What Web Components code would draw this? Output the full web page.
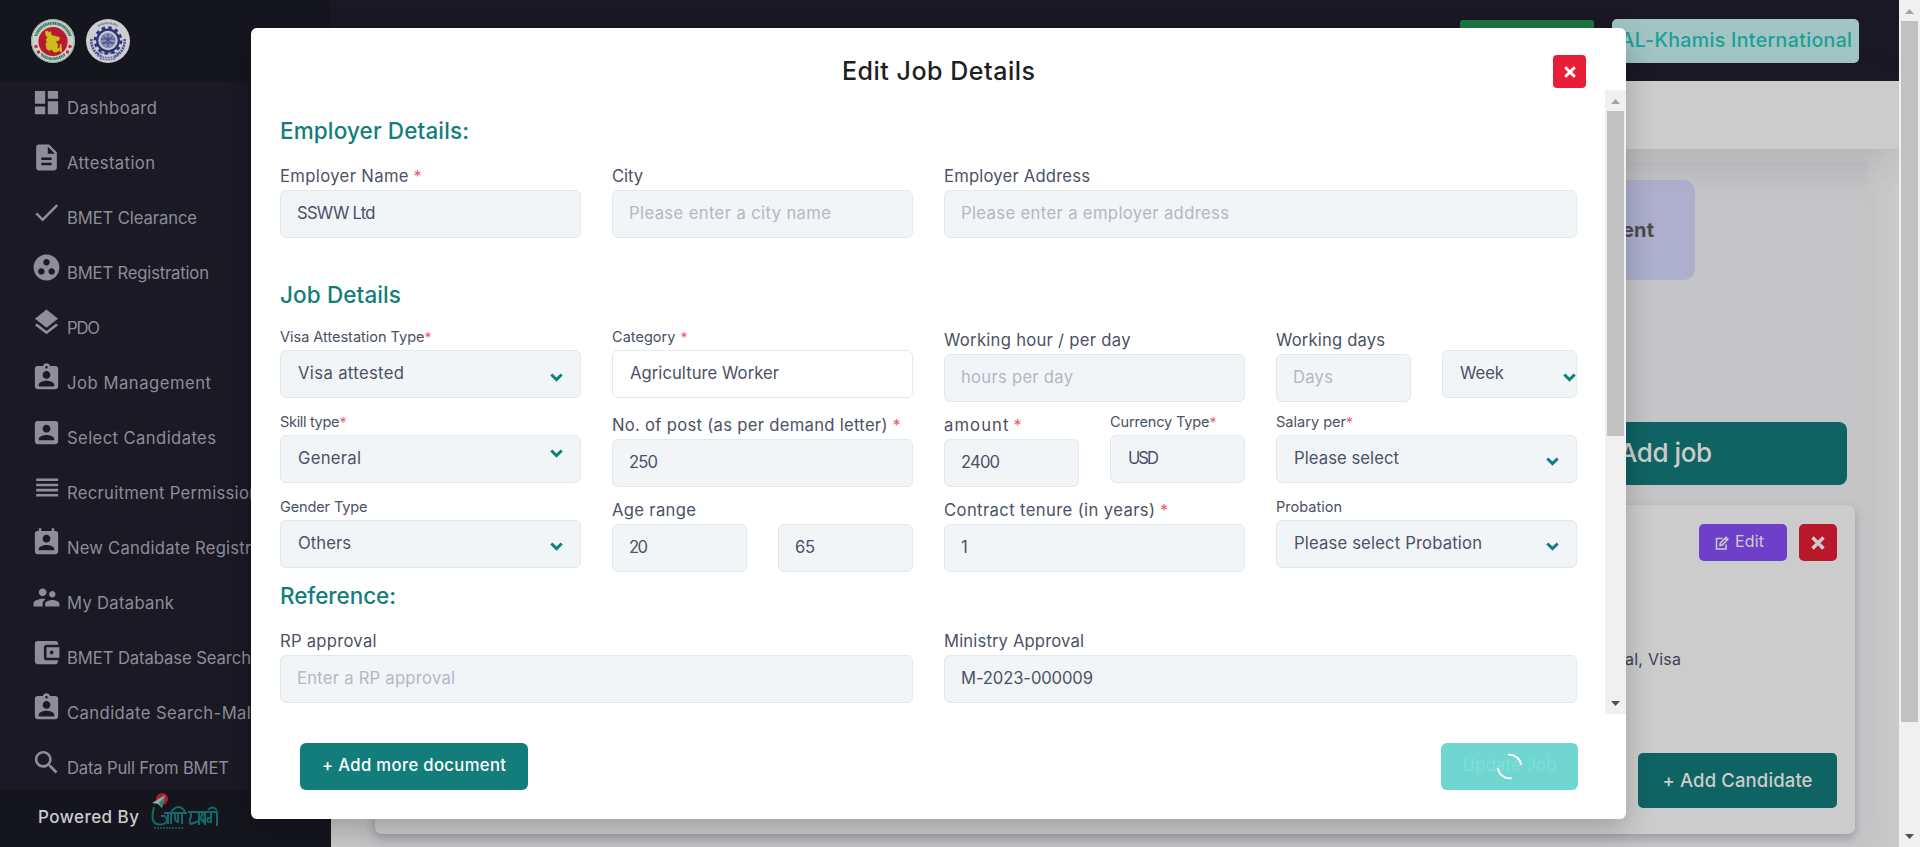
<!DOCTYPE html>
<html lang="en">
<head>
<meta charset="utf-8">
<title>Edit Job Details</title>
<style>
html,body{margin:0;height:100%;overflow:hidden}
body{font-family:Inter,"Open Sans",sans-serif;font-size:16px;color:#4b5166}
</style>
</head>
<body>
<job-page></job-page>
<script>
const make = (name, html, init) => customElements.define(name, class extends HTMLElement {
  constructor() { super(); this.attachShadow({ mode: 'open' }); }
  connectedCallback() {
    if (this.shadowRoot.childNodes.length) return;
    this.shadowRoot.innerHTML = typeof html === 'function' ? html(this) : html;
    if (init) init(this);
  }
});

const icons = {
  dashboard: 'M3 13h8V3H3v10zm0 8h8v-6H3v6zm10 0h8V11h-8v10zm0-18v6h8V3h-8z',
  doc: 'M14 2H6c-1.1 0-1.99.9-1.99 2L4 20c0 1.1.89 2 1.99 2H18c1.1 0 2-.9 2-2V8l-6-6zm2 16H8v-2h8v2zm0-4H8v-2h8v2zm-3-5V3.5L18.5 9H13z',
  check: 'M9 16.17L4.83 12l-1.42 1.41L9 19 21 7l-1.41-1.41z',
  group: 'M12 2C6.48 2 2 6.48 2 12s4.48 10 10 10 10-4.48 10-10S17.52 2 12 2zM8 17.5c-1.38 0-2.5-1.12-2.5-2.5s1.12-2.5 2.5-2.5 2.5 1.12 2.5 2.5-1.12 2.5-2.5 2.5zM9.5 8c0-1.38 1.12-2.5 2.5-2.5s2.5 1.12 2.5 2.5-1.12 2.5-2.5 2.5S9.5 9.38 9.5 8zm6.5 9.5c-1.38 0-2.5-1.12-2.5-2.5s1.12-2.5 2.5-2.5 2.5 1.12 2.5 2.5-1.12 2.5-2.5 2.5z',
  layers: 'M11.99 18.54l-7.37-5.73L3 14.07l9 7 9-7-1.63-1.27-7.38 5.74zM12 16l7.36-5.73L21 9l-9-7-9 7 1.63 1.27L12 16z',
  assign: 'M19 3h-4.18C14.4 1.84 13.3 1 12 1c-1.3 0-2.4.84-2.82 2H5c-1.1 0-2 .9-2 2v14c0 1.1.9 2 2 2h14c1.1 0 2-.9 2-2V5c0-1.1-.9-2-2-2zm-7 0c.55 0 1 .45 1 1s-.45 1-1 1-1-.45-1-1 .45-1 1-1zm0 4c1.66 0 3 1.34 3 3s-1.34 3-3 3-3-1.34-3-3 1.34-3 3-3zm6 12H6v-1.4c0-2 4-3.1 6-3.1s6 1.1 6 3.1V19z',
  account: 'M3 5v14c0 1.1.89 2 2 2h14c1.1 0 2-.9 2-2V5c0-1.1-.9-2-2-2H5c-1.11 0-2 .9-2 2zm12 4c0 1.66-1.34 3-3 3s-3-1.34-3-3 1.34-3 3-3 3 1.34 3 3zm-9 8c0-2 4-3.1 6-3.1s6 1.1 6 3.1v1H6v-1z',
  lines: 'M4 15h17v-2H4v2zm0 4h17v-2H4v2zm0-8h17V9H4v2zm0-6v2h17V5H4z',
  calendar: 'M19 3h-1V1h-2v2H8V1H6v2H5c-1.11 0-2 .9-2 2v14c0 1.1.89 2 2 2h14c1.1 0 2-.9 2-2V5c0-1.1-.9-2-2-2zm-7 3c1.66 0 3 1.34 3 3s-1.34 3-3 3-3-1.34-3-3 1.34-3 3-3zm6 12H6v-1c0-2 4-3.1 6-3.1s6 1.1 6 3.1v1z',
  people: 'M16.5 12c1.38 0 2.49-1.12 2.49-2.5S17.88 7 16.5 7C15.12 7 14 8.12 14 9.5s1.12 2.5 2.5 2.5zM9 11c1.66 0 2.99-1.34 2.99-3S10.66 5 9 5C7.34 5 6 6.34 6 8s1.34 3 3 3zm7.5 3c-1.83 0-5.5.92-5.5 2.75V19h11v-2.25c0-1.83-3.67-2.75-5.5-2.75zM9 13c-2.33 0-7 1.17-7 3.5V19h7v-2.25c0-.85.33-2.34 2.37-3.47C10.5 13.1 9.66 13 9 13z',
  wallet: 'M21 18v1c0 1.1-.9 2-2 2H5c-1.11 0-2-.9-2-2V5c0-1.1.89-2 2-2h14c1.1 0 2 .9 2 2v1h-9c-1.11 0-2 .9-2 2v8c0 1.1.89 2 2 2h9zm-9-2h10V8H12v8zm4-2.5c-.83 0-1.5-.67-1.5-1.5s.67-1.5 1.5-1.5 1.5.67 1.5 1.5-.67 1.5-1.5 1.5z',
  search: 'M15.5 14h-.79l-.28-.27C15.41 12.59 16 11.11 16 9.5 16 5.91 13.09 3 9.5 3S3 5.91 3 9.5 5.91 16 9.5 16c1.61 0 3.09-.59 4.23-1.57l.27.28v.79l5 4.99L20.49 19l-4.99-5zm-6 0C7.01 14 5 11.99 5 9.5S7.01 5 9.5 5 14 7.01 14 9.5 11.99 14 9.5 14z'
};

make('job-page', `
<style>
:host{display:grid;grid-template-columns:331px 1fr 21px;height:847px;width:1920px;position:relative;overflow:hidden;background:#c9c9ca}
job-modal{position:absolute;left:251px;top:28px}
</style>
<side-bar></side-bar>
<main-area></main-area>
<scroll-bar style="--thumb:701px"></scroll-bar>
<job-modal></job-modal>`);

make('side-bar', `
<style>
:host{display:flex;flex-direction:column;background:#1a1924;overflow:hidden}
header{height:81px;flex:none;background:#15151e;display:flex;align-items:center;gap:11px;padding-left:31px}
nav{flex:1;min-height:0}
footer{height:57px;flex:none;background:#15151e;display:flex;align-items:flex-start;color:#ccc;font-size:17px;font-weight:450;padding-left:38px}
footer fit-text{margin-top:16px;line-height:22px}
footer svg{margin:2px 0 0 12px}
</style>
<header>
<svg width="44" height="44" viewBox="0 0 44 44"><mask id="m"><rect width="44" height="17" fill="#fff"/><rect x="10" y="34" width="24" height="10" fill="#fff"/></mask><circle cx="22" cy="22" r="22" fill="#cfd0ce"/><circle cx="22" cy="22" r="21.3" fill="none" stroke="#7fa796" stroke-width=".8"/><circle cx="22" cy="22" r="17.8" fill="none" stroke="#2b7b5b" stroke-width="3" stroke-dasharray="1.6 .5 .8 .4 1.200 .5" mask="url(#m)"/><circle cx="22" cy="22.500" r="14.600" fill="#b8192e"/><path d="M14 12.500l2.500-1 2 2 1.500-1.500.5 4 6 1.500 2.500 1-1 3-3 1 2 3-.5 4 2-1 .5-4 1.500 1 .5 6-.5 3-2-3-2 1.500-3 .5-3.500-3-1.500 1.500-3-2-1-5.500 1.500-1.500-1.500-2.500 2-1.500-2-3z" fill="#cdbb17"/><g fill="#c22a3e"><circle cx="5" cy="27.500" r="1.700"/><circle cx="7.500" cy="33" r="1.700"/><circle cx="39" cy="27.500" r="1.700"/><circle cx="36.500" cy="33" r="1.700"/></g></svg>
<svg width="44" height="44" viewBox="0 0 44 44"><circle cx="22" cy="22" r="22" fill="#cdcdcf"/><path d="M12 7a19 19 0 0 1 20 0M11 34l22 0" fill="none" stroke="#7d82af" stroke-width="2" stroke-dasharray="2 .6 1 .5"/><path d="M5.500 20a17 17 0 0 0 11 18M38.500 20a17 17 0 0 1-11 18" fill="none" stroke="#4b5294" stroke-width="2.600" stroke-dasharray="2 .8"/><circle cx="22" cy="21.500" r="12.800" fill="none" stroke="#2c3478" stroke-width="3" stroke-dasharray="3.350 3.350"/><circle cx="22" cy="21.500" r="10.800" fill="none" stroke="#2c3478" stroke-width="2.200"/><circle cx="22" cy="21.500" r="7.800" fill="#8a8eb4"/><path d="M15 20h14M15.500 24h13M22 15v13M17 17l10 8M27 17l-10 8" stroke="#40478a" stroke-width="1"/><path d="M11 36.500q11 4 22 0M14 39.500q8 2 16 0" fill="none" stroke="#6d73a8" stroke-width="1.500" stroke-dasharray="2 .7"/></svg>
</header>
<nav>
<nav-item icon="dashboard" w="90">Dashboard</nav-item>
<nav-item icon="doc" w="88">Attestation</nav-item>
<nav-item icon="check" w="130">BMET Clearance</nav-item>
<nav-item icon="group" w="142">BMET Registration</nav-item>
<nav-item icon="layers" w="33">PDO</nav-item>
<nav-item icon="assign" w="144">Job Management</nav-item>
<nav-item icon="account" w="149">Select Candidates</nav-item>
<nav-item icon="lines" w="192">Recruitment Permission</nav-item>
<nav-item icon="calendar" w="224">New Candidate Registration</nav-item>
<nav-item icon="people" w="107">My Databank</nav-item>
<nav-item icon="wallet" w="184">BMET Database Search</nav-item>
<nav-item icon="assign" w="194">Candidate Search-Male</nav-item>
<nav-item icon="search" w="162">Data Pull From BMET</nav-item>
</nav>
<footer><fit-text w="101">Powered By</fit-text>
<svg width="68" height="39" viewBox="0 0 68 39"><circle cx="11" cy="7" r="6" fill="#b01b2d"/><path d="M1 11L14 3l-3 13-4-4z" fill="#7fb3a7"/><path d="M8 11l5-6-2 11z" fill="#2b8076"/><g fill="none" stroke="#12696a" stroke-width="2"><path d="M3 15q-4 15 3 17t10-3q0-6-6-5M17 21v11M20 21v11M13 21h23M24 21q-1 8 3 9v-9M31 21v11M20 20q7-9 13-2l2 4M37 20h29M40 20v5q-3 4 0 7l8-3v-9M48 20v13M53 20q-6 7 0 10l1-10v13M60 20v10q-5 1-3-4h4M66 19v15M57 18q4-5 9 0"/></g><path d="M3 36h30" stroke="#164a4c" stroke-width="2" stroke-dasharray="2 1"/></svg>
</footer>`);

make('nav-item', el => `
<style>
:host{display:flex;height:55px;align-items:center;padding-left:31px;color:#8e8d98;white-space:nowrap}
svg{width:31px;height:31px;fill:currentColor;flex:none;position:relative;top:-6px;margin-right:5px}
fit-text{padding-bottom:2px}
</style>
<svg viewBox="0 0 24 24"><path d="${icons[el.getAttribute('icon')]}"/></svg><fit-text big w="${el.getAttribute('w')}">${el.textContent}</fit-text>`);

make('scroll-bar', `
<style>
:host{display:flex;flex-direction:column;background:#f0f0f0;width:21px;box-sizing:border-box}
.a{height:21px;flex:none;display:flex;align-items:center;justify-content:center;padding-top:2px;box-sizing:border-box}
.a:last-child{padding:0 0 1px}
.t{height:var(--thumb);margin:0 2px;background:#c1c1c1;flex:none}
.s{flex:1}
</style>
<div class="a"><svg width="9" height="5"><path d="M0 5L4.500 0 9 5z" fill="#a3a3a3"/></svg></div><div class="t"></div><div class="s"></div>
<div class="a"><svg width="9" height="5"><path d="M0 0L4.500 5 9 0z" fill="#505050"/></svg></div>`);

make('main-area', `
<style>
:host{display:flex;flex-direction:column;min-width:0;overflow:hidden}
.top{height:81px;flex:none;background:#191823;display:flex;justify-content:flex-end;align-items:flex-start;padding-right:40px;box-sizing:border-box}
.green{width:134px;height:42px;margin:20px 18px 0 0;background:#1b7742;border-radius:3px}
.who{width:247px;height:44px;margin-top:19px;box-sizing:border-box;background:#a1c5c3;color:#1c9f97;border-radius:5px;display:flex;align-items:center;justify-content:flex-end;padding:0 7px 2px 0;font-size:19.500px;font-weight:450}
.crumb{height:68px;flex:none;background:#ccc;position:relative;box-shadow:0 6px 36px rgba(60,60,80,.16)}
.body{flex:1;min-height:0;margin:12px 31px 0 44px;box-sizing:border-box;background:linear-gradient(#bfbfc2,#c5c5c7 45px,#c5c5c7);border:1px solid #c4c4c7;border-bottom:0;padding-top:18px;display:flex;flex-direction:column;align-items:flex-end;box-shadow:0 0 26px rgba(120,120,130,.12)}
.tile{width:320px;height:100px;margin-right:172px;box-sizing:border-box;border-radius:12px;background:#aeafcc;color:#4b4b4c;font-weight:700;font-size:20px;display:flex;align-items:center;justify-content:flex-end;padding-right:41px}
.add{width:320px;height:63px;margin:142px 20px 0 0;box-sizing:border-box;border-radius:8px;background:#0f6363;color:#ccc;font-size:26px;font-weight:500;display:flex;align-items:center;justify-content:flex-end;padding:0 135px 2px 0}
.card{width:1480px;height:329px;flex:none;margin:20px 12px 0 0;box-sizing:border-box;background:#ccc;border-radius:7px;padding:19px 18px 26px;display:flex;flex-direction:column;align-items:flex-end;box-shadow:0 4px 10px rgba(70,75,95,.35)}
.acts{display:flex;gap:12px}
.edit,.del{height:37px;border-radius:5px;display:flex;align-items:center;color:#ccc}
.edit{width:88px;background:#6e3fc9;box-sizing:border-box;padding-left:16px;gap:6px}
.edit fit-text{margin-top:-3px}
.del{width:38px;background:#b9182b;justify-content:center}
.visa{margin:88px 156px 0 0;color:#3c4157;line-height:20px}
.cand{margin-top:auto;width:199px;height:55px;box-sizing:border-box;padding-bottom:2px;border-radius:5px;background:#0f6363;color:#ccc;font-size:18.500px;font-weight:450;display:flex;align-items:center;justify-content:center}
</style>
<div class="top"><div class="green"></div><div class="who"><fit-text w="231">AL-Khamis International</fit-text></div></div>
<div class="crumb"></div>
<div class="body">
<div class="tile"><fit-text w="32">ent</fit-text></div>
<div class="add"><fit-text w="93">Add job</fit-text></div>
<div class="card">
<div class="acts"><div class="edit"><svg width="14" height="14" viewBox="0 0 14 14" fill="none" stroke="#ccc" stroke-width="1.500"><path d="M7.500 2.500h-6v10.500h9.500V8.500M5 9.500l.3-2.300L11 1.300 12.900 3.200 7.200 9z M9.800 2.600l1.900 1.900"/></svg><fit-text w="29">Edit</fit-text></div>
<div class="del"><svg width="14" height="14" viewBox="0 0 14 14"><path d="M1.500 1.500l11 11M12.500 1.500l-11 11" stroke="#ccc" stroke-width="3.400"/></svg></div></div>
<div class="visa"><fit-text w="56">al, Visa</fit-text></div>
<div class="cand"><fit-text w="150">+ Add Candidate</fit-text></div>
</div>
</div>`);

make('job-modal', `
<style>
:host{display:flex;flex-direction:column;width:1375px;height:791px;background:#fff;border-radius:6px;overflow:hidden;box-shadow:0 10px 30px rgba(0,0,0,.22)}
header{height:62px;flex:none;display:grid;grid-template-columns:1fr auto 1fr;align-items:start;color:#1e1e22}
header fit-text{font-size:25px;font-weight:550;line-height:30px;margin-top:28px}
.x{justify-self:end;margin:27px 40px 0 0;width:33px;height:33px;border-radius:4px;background:#e81e36;display:flex;align-items:center;justify-content:center}
.mid{height:624px;flex:none;display:flex}
.form{flex:1;padding:25px 28px 0 29px;min-width:0;overflow:hidden}
h2{margin:0 0 17px;height:32px;line-height:32px;font-size:22.500px;font-weight:470;color:#137d7b}
.g{display:grid;grid-template-columns:repeat(4,301px);column-gap:31px;grid-auto-rows:85px}
.two{display:flex;gap:31px}.two>*{flex:1}
.w2{grid-column:span 2}
.foot{flex:1;display:flex;justify-content:space-between;padding:29px 48px 0 49px}
.b{height:47px;box-sizing:border-box;border-radius:6px;display:flex;align-items:center;justify-content:center;padding-bottom:3px}
.more{width:228px;background:#127d7b;color:#fff;font-weight:450}
.upd{width:137px;background:#6fd6d0;color:#83deda;position:relative}
.upd svg{position:absolute;left:55px;top:10px}
</style>
<header><span></span><fit-text w="193">Edit Job Details</fit-text><div class="x"><svg width="12" height="12" viewBox="0 0 12 12"><path d="M1.200 1.200l9.600 9.600M10.800 1.200l-9.600 9.600" stroke="#fff" stroke-width="2.900"/></svg></div></header>
<div class="mid"><div class="form">
<h2><fit-text w="189">Employer Details:</fit-text></h2>
<div class="g">
<form-field label="Employer Name" lw="128.500" req="sp" w="78.500">SSWW Ltd</form-field>
<form-field label="City" lw="31" ph w="202">Please enter a city name</form-field>
<form-field class="w2" label="Employer Address" lw="146" ph w="268">Please enter a employer address</form-field>
</div>
<h2 style="margin-top:30px"><fit-text w="121">Job Details</fit-text></h2>
<div class="g">
<form-field small label="Visa Attestation Type" lw="144.500" req="no" w="106" chev="27">Visa attested</form-field>
<form-field small white label="Category" lw="63.500" req="sp" w="149">Agriculture Worker</form-field>
<form-field label="Working hour / per day" lw="186.500" ph w="112">hours per day</form-field>
<div class="two"><form-field label="Working days" lw="109" ph w="40">Days</form-field><form-field small label="" w="44" chev="27" cr="1">Week</form-field></div>
<form-field small label="Skill type" lw="59.500" req="no" w="63" chev="18">General</form-field>
<form-field label="No. of post (as per demand letter)" lw="275.500" req="sp" w="29">250</form-field>
<div class="two"><form-field label="amount" lw="64.500" req="sp" w="39">2400</form-field><form-field small label="Currency Type" lw="99.500" req="no" w="31">USD</form-field></div>
<form-field small label="Salary per" lw="70" req="no" w="105" chev="26">Please select</form-field>
<form-field small label="Gender Type" lw="87.500" w="53" chev="26">Others</form-field>
<div class="two"><form-field label="Age range" lw="84" w="19">20</form-field><form-field label="" w="20">65</form-field></div>
<form-field label="Contract tenure (in years)" lw="211" req="sp" w="6">1</form-field>
<form-field small label="Probation" lw="66" w="188" chev="26">Please select Probation</form-field>
</div>
<h2 style="margin-top:-3px"><fit-text w="116">Reference:</fit-text></h2>
<div class="g">
<form-field class="w2" label="RP approval" lw="96.500" ph w="158">Enter a RP approval</form-field>
<form-field class="w2" label="Ministry Approval" lw="140" w="132">M-2023-000009</form-field>
</div>
</div><scroll-bar style="--thumb:325px"></scroll-bar></div>
<div class="foot"><div class="b more"><fit-text big w="184">+ Add more document</fit-text></div>
<div class="b upd"><fit-text big w="94">Update Job</fit-text><svg width="27" height="27" viewBox="0 0 27 27" fill="none" stroke="#fff" stroke-width="2"><path d="M12 1.800A11.800 11.800 0 0 1 25.200 12M1.900 15A11.800 11.800 0 0 0 15.500 25.200"/></svg></div></div>`);

make('form-field', el => {
  const a = n => el.getAttribute(n), small = el.hasAttribute('small');
  return `
<style>
:host{display:block;min-width:0}
:host(.w2){grid-column:span 2}
.l{height:${small ? 22 : 26}px;line-height:${small ? 19 : 24}px;font-size:${small ? 14 : 16}px;white-space:nowrap;display:flex}
.l i{font-style:normal;color:#f1566b;margin-left:${a('req') === 'sp' ? 5 : 0}px}
.b{height:48px;box-sizing:border-box;border:1px solid #e2e8ec;border-radius:6px;background:${el.hasAttribute('white') ? '#fff' : '#f1f5f8'};display:flex;align-items:center;padding:0 0 2px ${small ? 17 : 16}px;position:relative;color:${el.hasAttribute('ph') ? '#b7b5c6' : '#4b5166'}}
.b svg{position:absolute;right:${a('cr') ? 0 : 17}px;top:${(+a('chev') || 0) - 5}px}
</style>
<div class="l">${a('label') ? `<fit-text big w="${a('lw')}">${a('label')}</fit-text>` : ''}${a('req') ? '<i>*</i>' : ''}</div>
<div class="b"><fit-text big w="${a('w')}">${el.textContent}</fit-text>${a('chev') ? '<svg width="13" height="9" viewBox="0 0 13 9"><path d="M1.300 1.500L6.500 6.600 11.700 1.500" fill="none" stroke="#0f7f7b" stroke-width="2.900"/></svg>' : ''}</div>`;
});

// Spreads a run of text to a given width by adjusting its letter spacing.
make('fit-text', '<style>:host{display:block;flex:none;width:max-content;white-space:nowrap}:host([big]){font-size:1.04em}</style><slot></slot>', el => {
  const w = +el.getAttribute('w'), n = el.textContent.length;
  const d = (w - el.getBoundingClientRect().width) / Math.max(1, n - 1);
  el.style.letterSpacing = d.toFixed(3) + 'px';
  el.style.marginRight = (-d).toFixed(3) + 'px';
});
</script>
</body>
</html>
